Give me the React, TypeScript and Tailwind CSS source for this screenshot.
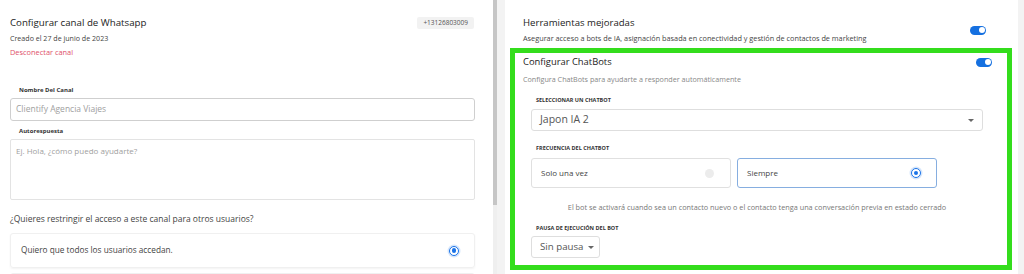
const font = { fontFamily: '"Open Sans", "Liberation Sans", sans-serif' };

function Toggle() {
  return (
    <div className="flex h-[9px] w-[16px] items-center justify-end rounded-full bg-[#1570e0] px-[1.5px]">
      <div className="h-[6px] w-[6px] rounded-full bg-white" />
    </div>
  );
}

function Radio({ on }: { on: boolean }) {
  if (!on) return <div className="h-[9px] w-[9px] rounded-full bg-[#ececec]" />;
  return (
    <div className="flex h-[10px] w-[10px] items-center justify-center rounded-full border-[1.5px] border-[#1a73e8] bg-white shadow-[0_0_0_1.5px_#d6e6fb]">
      <div className="h-[4.5px] w-[4.5px] rounded-full bg-[#1a73e8]" />
    </div>
  );
}

function Caret() {
  return <div className="h-0 w-0 border-x-[3px] border-t-[3.5px] border-x-transparent border-t-[#666]" />;
}

export default function App() {
  return (
    <div style={font} className="flex h-[274px] w-[1024px] overflow-hidden bg-[#f3f3f3] text-[#333]">
      {/* Canal de Whatsapp */}
      <div className="w-[493px] bg-white pl-[10px] pr-[18px] pt-[16px]">
        <div className="flex items-start justify-between">
          <h2 className="text-[9.7px] leading-[14px] text-[#222]">Configurar canal de Whatsapp</h2>
          <span className="mr-[1px] mt-[1px] rounded-[2px] bg-[#f2f2f2] px-[6px] text-[6.5px] leading-[12px] text-[#555]">
            +13126803009
          </span>
        </div>
        <p className="mt-[2px] text-[7.1px] leading-[12px] text-[#444]">Creado el 27 de junio de 2023</p>
        <p className="mt-[2px] text-[7.4px] leading-[12px] text-[#e0506a]">Desconectar canal</p>

        <label className="mt-[27px] block pl-[9px] text-[6px] font-bold leading-[10px] text-[#333]">Nombre Del Canal</label>
        <div className="mt-[3px] flex h-[23px] items-center rounded-[3px] border border-[#cfcfcf] px-[5px] text-[8.5px] text-[#a0a0a0]">
          Clientify Agencia Viajes
        </div>
        <label className="mt-[5px] block pl-[9px] text-[6px] font-bold leading-[10px] text-[#333]">Autorespuesta</label>
        <div className="mt-[3px] h-[61px] rounded-[2px] border border-[#e3e3e3] px-[5px] pt-[5px] text-[8px] leading-[12px] text-[#a0a0a0]">
          Ej. Hola, ¿cómo puedo ayudarte?
        </div>

        <p className="mt-[13px] text-[8.5px] leading-[12px] text-[#444]">
          ¿Quieres restringir el acceso a este canal para otros usuarios?
        </p>
        <div className="mt-[8px] flex h-[35px] items-center justify-between rounded-[3px] border border-[#f0f0f0] pl-[10px] pr-[15px] shadow-[0_1px_2px_rgba(0,0,0,0.05)]">
          <span className="text-[8.25px] text-[#444]">Quiero que todos los usuarios accedan.</span>
          <Radio on />
        </div>
        <div className="mt-[5px] h-[35px] rounded-[3px] border border-[#f0f0f0]" />
      </div>

      {/* Scrollbar */}
      <div className="w-[4px] bg-[#efefef]">
        <div className="h-[205px] bg-[#c6c6c6]" />
      </div>
      <div className="w-[8px]" />

      {/* Herramientas */}
      <div className="w-[513px] bg-white pr-[6px] pt-[16px]">
        <div className="flex items-center justify-between pl-[18px] pr-[26px]">
          <div>
            <h2 className="text-[9.6px] leading-[14px] text-[#222]">Herramientas mejoradas</h2>
            <p className="mt-[2px] text-[7.3px] leading-[12px] text-[#444]">
              Asegurar acceso a bots de IA, asignación basada en conectividad y gestión de contactos de marketing
            </p>
          </div>
          <Toggle />
        </div>

        <div className="ml-[5px] mt-[4px] h-[222px] border-[5px] border-[#34dd1c] pl-[8px] pr-[15px] pt-[2px]">
          <div className="flex items-center justify-between">
            <h2 className="text-[9.4px] leading-[14px] text-[#222]">Configurar ChatBots</h2>
            <Toggle />
          </div>
          <p className="mt-[4px] text-[7.2px] leading-[12px] text-[#888]">
            Configura ChatBots para ayudarte a responder automáticamente
          </p>

          <div className="pl-[8px] pr-[9px]">
            <label className="mt-[11px] block pl-[5px] text-[5.5px] font-bold uppercase leading-[8px] text-[#333]">
              Seleccionar un chatbot
            </label>
            <div className="mt-[5px] flex h-[22px] items-center justify-between rounded-[3px] border border-[#dedede] pl-[8px] pr-[8px] text-[10.5px] text-[#555]">
              <span>Japon IA 2</span>
              <Caret />
            </div>

            <label className="mt-[13px] block pl-[5px] text-[5.5px] font-bold uppercase leading-[8px] text-[#333]">
              Frecuencia del chatbot
            </label>
            <div className="mt-[6px] grid w-[406px] grid-cols-2 gap-[6px]">
              <div className="flex h-[30px] items-center justify-between rounded-[3px] border border-[#e0e0e0] pl-[9px] pr-[16px] text-[8px] text-[#444]">
                <span>Solo una vez</span>
                <Radio on={false} />
              </div>
              <div className="flex h-[30px] items-center justify-between rounded-[3px] border border-[#86aee0] pl-[9px] pr-[15px] text-[8px] text-[#444]">
                <span>Siempre</span>
                <Radio on />
              </div>
            </div>

            <p className="mt-[13px] text-center text-[7.3px] leading-[12px] text-[#777]">
              El bot se activará cuando sea un contacto nuevo o el contacto tenga una conversación previa en estado cerrado
            </p>

            <label className="mt-[11px] block pl-[5px] text-[5.5px] font-bold uppercase leading-[8px] text-[#333]">
              Pausa de ejecución del bot
            </label>
            <div className="mt-[4px] flex h-[22px] w-[69px] items-center gap-[5px] rounded-[3px] border border-[#dedede] pl-[8px] text-[9.7px] text-[#555]">
              <span>Sin pausa</span>
              <Caret />
            </div>
          </div>
        </div>
      </div>
      <div className="flex-1" />
    </div>
  );
}
